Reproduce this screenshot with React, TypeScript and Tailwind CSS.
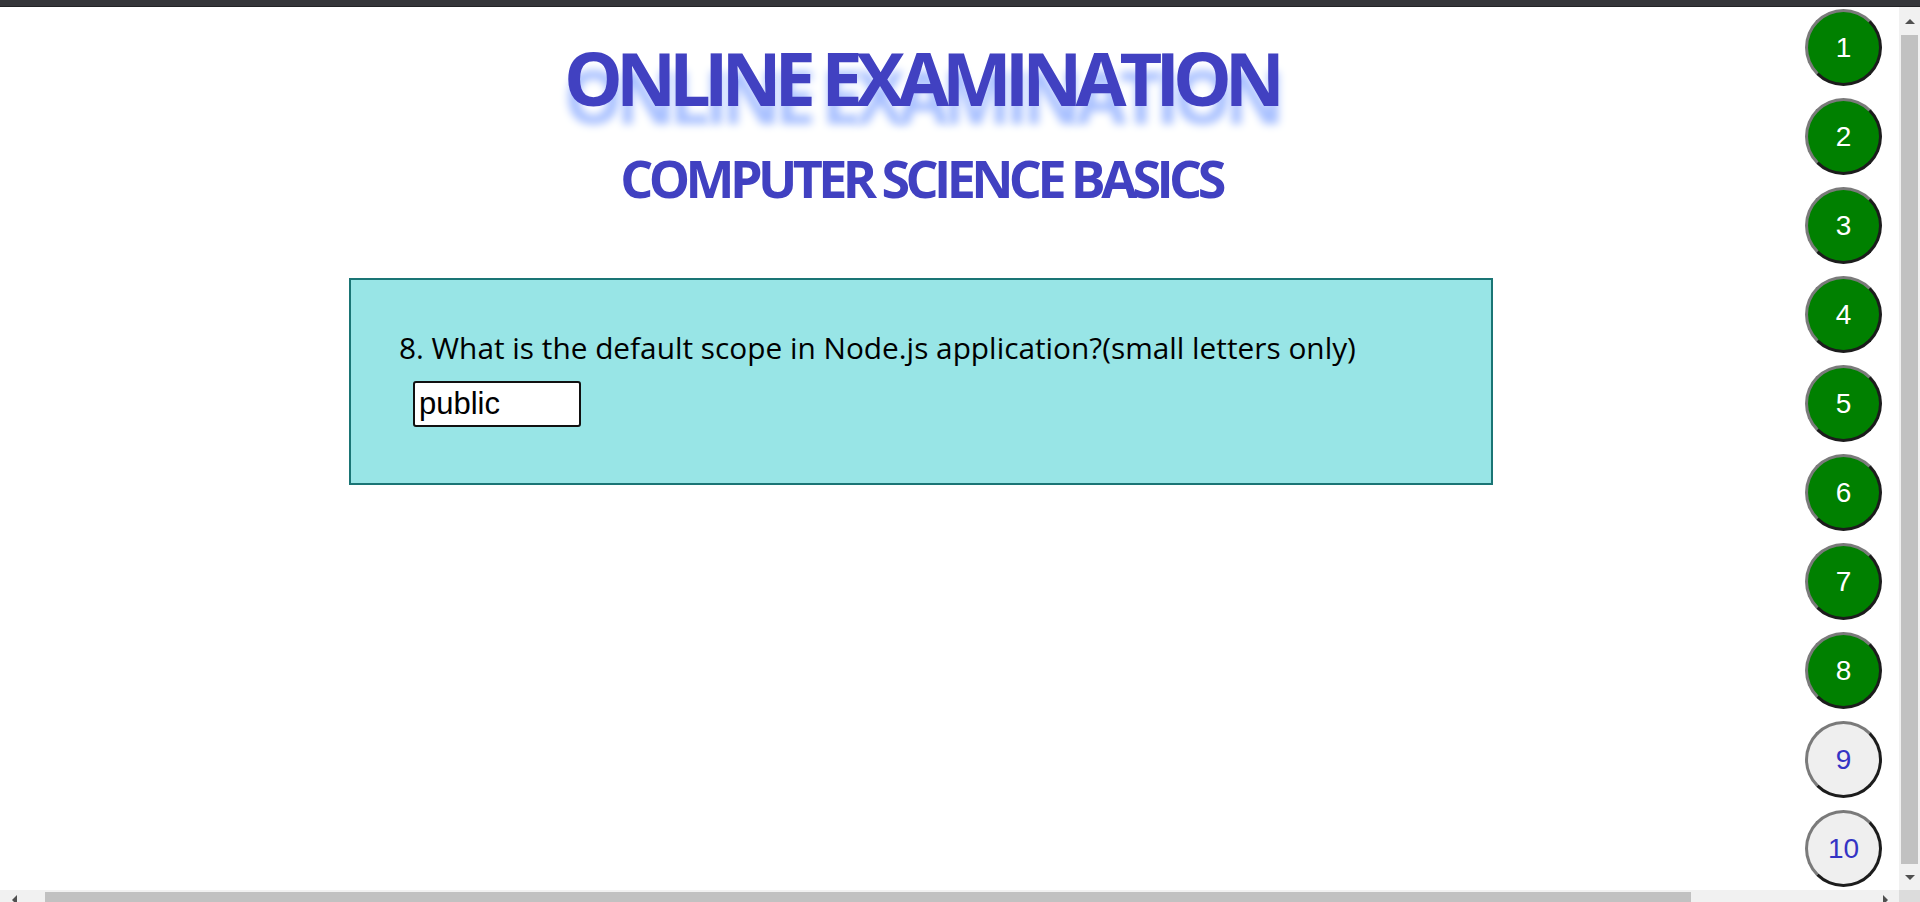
const answered = [1, 2, 3, 4, 5, 6, 7, 8];
const questions = [1, 2, 3, 4, 5, 6, 7, 8, 9, 10];

function NumberButton({ n }: { n: number }) {
  const done = answered.includes(n);
  return (
    <button
      className={`flex h-[77px] w-[77px] shrink-0 items-center justify-center rounded-full border-[3px] border-t-[#7a7a7a] border-l-[#7a7a7a] border-r-[#1c1c1c] border-b-[#1c1c1c] text-[28px] leading-none ${
        done ? "bg-[#008000] text-white" : "bg-[#efefef] text-[#3434c4]"
      }`}
      style={{ fontFamily: '"Liberation Sans", Arial, sans-serif' }}
    >
      {n}
    </button>
  );
}

export default function App() {
  return (
    <div className="flex h-[902px] w-[1920px] flex-col overflow-hidden bg-white">
      <div className="h-[7px] shrink-0 border-b border-[#222326] bg-[#35363a]" />

      <div className="flex min-h-0 flex-1">
        <div className="flex min-w-0 flex-1 pl-[37px]">
          <main
            className="flex min-w-0 flex-1 flex-col items-center"
            style={{ fontFamily: '"Open Sans", "Noto Sans", sans-serif' }}
          >
            <h1 className="mt-[16px] text-[74px] font-bold leading-[110px] tracking-[-7px] text-[#4141c1] [text-shadow:0_18px_9px_#a8c0ff]">
              ONLINE EXAMINATION
            </h1>
            <h2 className="mt-[9px] text-[52px] font-bold leading-[72px] tracking-[-4.6px] text-[#4141c1]">
              COMPUTER SCIENCE BASICS
            </h2>

            <section className="mt-[64px] h-[207px] w-[1144px] border-2 border-[#1a7575] bg-[#98e5e6] pl-[48px] pt-[47px]">
              <p className="text-[29.8px] leading-[42px] text-black">
                8. What is the default scope in Node.js application?(small letters only)
              </p>
              <input
                defaultValue="public"
                className="ml-[14px] mt-[12px] block h-[46px] w-[168px] rounded-[3px] border-2 border-[#111] bg-white px-[4px] text-[31px] text-black outline-none"
                style={{ fontFamily: '"Liberation Sans", Arial, sans-serif' }}
              />
            </section>
          </main>

          <nav className="mr-[17px] mt-[2px] flex w-[77px] flex-col gap-[12px]">
            {questions.map((n) => (
              <NumberButton key={n} n={n} />
            ))}
          </nav>
        </div>

        {/* vertical scrollbar */}
        <div className="flex w-[21px] shrink-0 flex-col bg-[#f1f1f1]">
          <div className="flex h-[28px] items-center justify-center">
            <div className="h-0 w-0 border-x-[5px] border-b-[5px] border-x-transparent border-b-[#505050]" />
          </div>
          <div className="mx-[2px] h-[829px] bg-[#c1c1c1]" />
          <div className="flex flex-1 items-center justify-center">
            <div className="h-0 w-0 border-x-[5px] border-t-[5px] border-x-transparent border-t-[#505050]" />
          </div>
        </div>
      </div>

      {/* horizontal scrollbar */}
      <div className="flex h-[12px] shrink-0">
        <div className="flex flex-1 bg-[#f1f1f1] pt-[2px]">
          <div className="flex w-[28px] items-start justify-center pt-[3px]">
            <div className="h-0 w-0 border-y-[5px] border-r-[5px] border-y-transparent border-r-[#505050]" />
          </div>
          <div className="ml-[17px] h-[10px] w-[1646px] bg-[#c1c1c1]" />
          <div className="flex-1" />
          <div className="flex w-[28px] items-start justify-center pt-[3px]">
            <div className="h-0 w-0 border-y-[5px] border-l-[5px] border-y-transparent border-l-[#505050]" />
          </div>
        </div>
        <div className="w-[21px] bg-[#dcdcdc]" />
      </div>
    </div>
  );
}
